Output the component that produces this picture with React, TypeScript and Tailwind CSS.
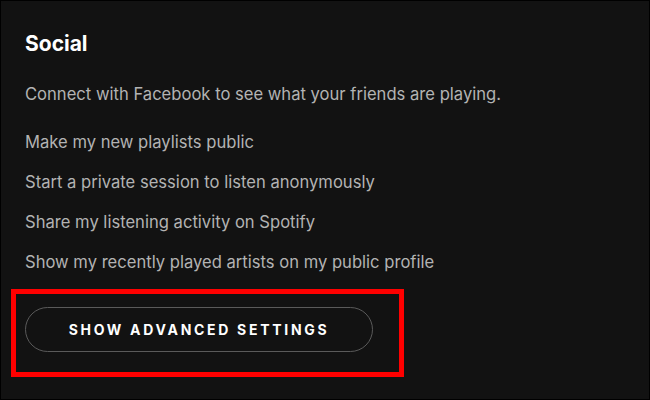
export default function App() {
  const items = [
    "Make my new playlists public",
    "Start a private session to listen anonymously",
    "Share my listening activity on Spotify",
    "Show my recently played artists on my public profile",
  ];
  return (
    <div
      className="w-[650px] h-[400px] bg-[#121212] border border-black overflow-hidden pl-[10px]"
      style={{ fontFamily: "Inter, 'Open Sans', sans-serif" }}
    >
      <div className="pl-[14px]">
        <h2 className="pt-[29px] text-[21px] leading-[28px] font-bold text-white">Social</h2>
        <p className="mt-[24px] text-[16.6px] leading-[24px] text-[#b3b3b3]">
          Connect with Facebook to see what your friends are playing.
        </p>
        <div className="mt-[16px] flex flex-col">
          {items.map((t) => (
            <div key={t} className="h-[40px] flex items-center text-[16.6px] text-[#b3b3b3]">
              {t}
            </div>
          ))}
        </div>
      </div>
      <div className="mt-[7px] w-[393px] h-[88px] border-[5px] border-[#ff0000] pl-[9px] pt-[13px]">
        <button className="w-[348px] h-[45px] rounded-full border border-[#5a5a5a] text-white text-[14px] font-bold tracking-[2.7px] uppercase">
          Show advanced settings
        </button>
      </div>
    </div>
  );
}
